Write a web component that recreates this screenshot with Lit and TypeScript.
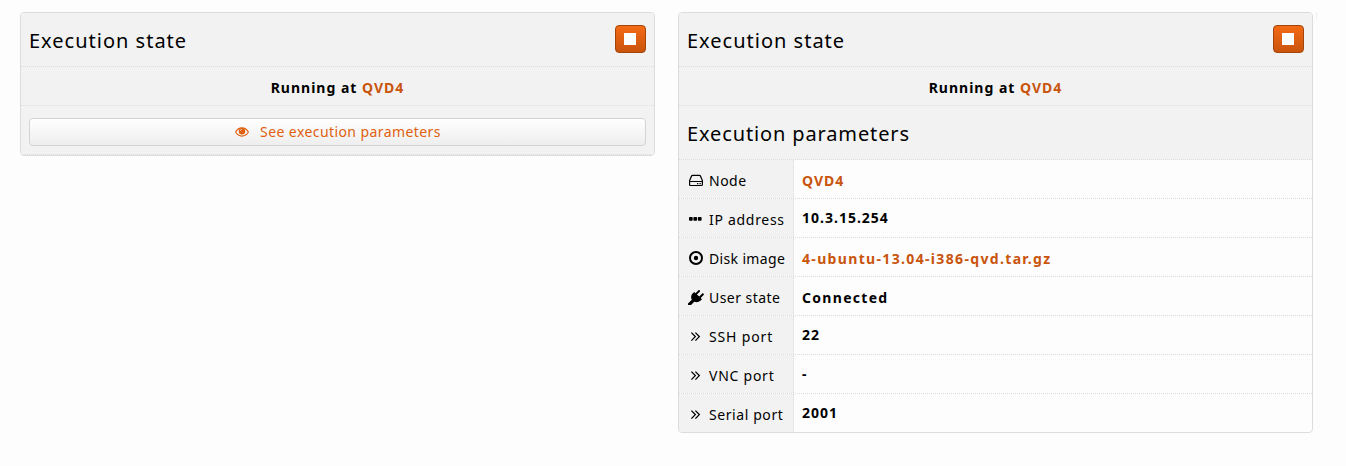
import { LitElement, html, css, svg } from "lit";
import { customElement, property } from "lit/decorators.js";

const icons: Record<string, unknown> = {
  disk: svg`<path d="M1.6 7.5 L3.6 2.9 Q3.9 2.4 4.5 2.4 H11.5 Q12.1 2.4 12.4 2.9 L14.4 7.5 V11.4 Q14.4 12.5 13.3 12.5 H2.7 Q1.6 12.5 1.6 11.4 Z M1.8 8.5 H14.2" fill="none" stroke="currentColor" stroke-width="1.2"/><path d="M9 10h1.3v1.2H9zM11.5 10h1.3v1.2h-1.3z" fill="currentColor"/>`,
  dots: svg`<rect x="1" y="5" width="3.7" height="3.7" rx=".8"/><rect x="5.4" y="5" width="3.7" height="3.7" rx=".8"/><rect x="9.9" y="5" width="3.7" height="3.7" rx=".8"/>`,
  disc: svg`<circle cx="8" cy="7" r="6" fill="none" stroke="currentColor" stroke-width="2"/><circle cx="8" cy="7" r="2.2"/>`,
  plug: svg`<path d="M15.7 3.7 Q16.3 4.4 15.6 5.1 L12.7 7.9 L14 9.2 L12.7 10.5 Q9.8 13.1 6.3 11.8 L3 15 H1.2 L0 14.9 V13.6 L3.8 9.8 Q2 6.1 4.8 3.3 L6.2 1.9 L7.5 3.2 L10.4 .3 Q11.1 -.3 11.8 .3 Q12.4 1 11.8 1.7 L8.9 4.6 L11.3 6.5 L14.2 3.6 Q15 3.1 15.7 3.7 Z"/>`,
  angles: svg`<path d="M3.4 3.6 L7.3 7.6 L3.4 11.6 M7.4 3.6 L11.3 7.6 L7.4 11.6" fill="none" stroke="currentColor" stroke-width="1.3"/>`,
  eye: svg`<path d="M1.6 8 Q4 3.9 8 3.9 T14.4 8 Q12 12.1 8 12.1 T1.6 8Z" fill="none" stroke="currentColor" stroke-width="1.1"/><circle cx="8" cy="7.3" r="3.2"/><path d="M6.3 7 Q6.4 5.4 8 5.3" fill="none" stroke="#fff" stroke-width=".6"/>`,
};

const rows = [
  { icon: "disk", label: "Node", track: 0.5, value: "QVD4", kind: "link" },
  { icon: "dots", label: "IP address", track: 0.7, value: "10.3.15.254", kind: "plain" },
  { icon: "disc", label: "Disk image", track: 0.35, value: "4-ubuntu-13.04-i386-qvd.tar.gz", kind: "link long" },
  { icon: "plug", label: "User state", track: 0.45, value: "Connected", kind: "state" },
  { icon: "angles", label: "SSH port", track: 0.85, value: "22", kind: "plain" },
  { icon: "angles", label: "VNC port", track: 0.75, value: "-", kind: "plain" },
  { icon: "angles", label: "Serial port", track: 0.58, value: "2001", kind: "plain" },
];

const icon = (name: string) =>
  html`<svg class="icon" viewBox="0 0 16 16" width="16" height="16" fill="currentColor">${icons[name]}</svg>`;

@customElement("execution-panel")
class ExecutionPanel extends LitElement {
  @property({ type: Boolean }) expanded = false;

  static styles = css`
    :host { display: block; box-sizing: border-box; width: 635px; border: 1px solid #dcdcdc; border-radius: 4px; overflow: hidden; background: #fdfdfd; }
    * { box-sizing: border-box; }
    .head, .status, .action { background: #f2f2f2; border-bottom: 1px dotted #dcdcdc; }
    .head { height: 54px; display: flex; align-items: center; justify-content: space-between; padding: 1px 8px 0; font-size: 20px; letter-spacing: 1px; }
    .params { letter-spacing: 0.87px; }
    .stop { width: 31px; height: 28px; margin-top: -2px; border: 1px solid #a34409; border-radius: 4px; background: linear-gradient(#f46a15, #c9540c); display: flex; align-items: center; justify-content: center; padding: 0 1px 0 0; }
    .stop i { width: 12px; height: 12px; background: #fdfdfd; }
    .status { height: 39px; line-height: 19px; padding-top: 11px; text-align: center; font-weight: 700; letter-spacing: 1px; }
    .accent { color: #c9540c; }
    .action { height: 49px; padding: 12px 8px 0; }
    .see { width: 100%; height: 28px; border: 1px solid #d3d3d3; border-radius: 4px; background: linear-gradient(#fff, #eee); font: inherit; letter-spacing: 0.42px; color: #e0600f; display: flex; align-items: center; justify-content: center; gap: 10px; padding: 0 0 2px; }
    .see .icon { margin-top: 2px; }
    .row { display: flex; height: 39px; border-bottom: 1px dotted #dcdcdc; }
    .row:last-child { height: 38px; border-bottom: 0; }
    .label { width: 115px; padding: 11px 0 0 9px; background: #f2f2f2; border-right: 1px dotted #dcdcdc; display: flex; gap: 5px; line-height: 19px; white-space: nowrap; }
    .icon { flex: none; display: block; overflow: visible; }
    .label .icon { margin-top: 2px; }
    .value { padding: 11px 8px 0; line-height: 19px; font-weight: 700; letter-spacing: 1px; }
    .plain { padding-top: 9px; }
    .state { letter-spacing: 1.3px; }
    .link { color: #c9540c; }
    .long { letter-spacing: 1.34px; }
  `;

  render() {
    return html`
      <div class="head"><span>Execution state</span><button class="stop" aria-label="Stop"><i></i></button></div>
      <div class="status">Running at <span class="accent">QVD4</span></div>
      ${this.expanded
        ? html`<div class="head params"><span>Execution parameters</span></div>
            <div>${rows.map((r) => html`<div class="row">
              <div class="label">${icon(r.icon)}<span style="letter-spacing:${r.track}px">${r.label}</span></div>
              <div class="value ${r.kind}">${r.value}</div></div>`)}</div>`
        : html`<div class="action"><button class="see">${icon("eye")}<span>See execution parameters</span></button></div>`}`;
  }
}

@customElement("app-root")
class AppRoot extends LitElement {
  static styles = css`
    :host { display: flex; align-items: flex-start; box-sizing: border-box; height: 466px; padding: 12px 20px; background: #fdfdfd; color: #000; font: 14px/19px "Noto Sans", "Open Sans", sans-serif; }
    .second { margin-left: 23px; }
    .edge { width: 1px; height: 7px; margin-left: 3px; background: #efefef; }
  `;
  render() {
    return html`<execution-panel></execution-panel><execution-panel class="second" expanded></execution-panel><div class="edge"></div>`;
  }
}
